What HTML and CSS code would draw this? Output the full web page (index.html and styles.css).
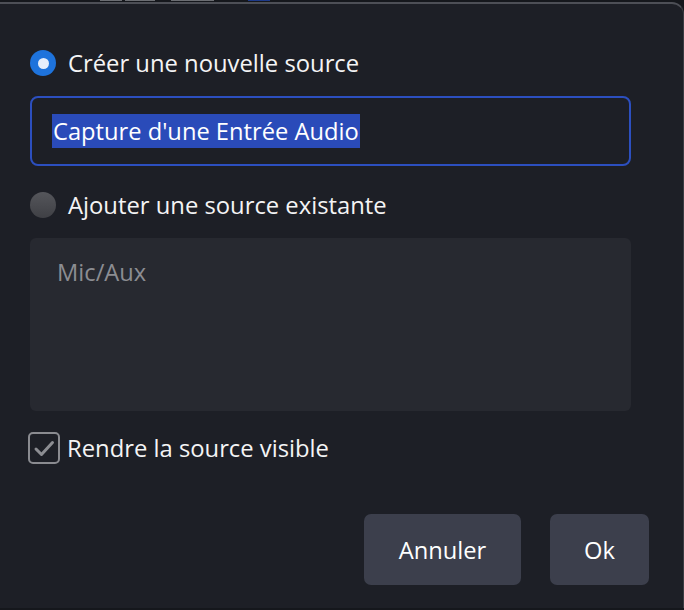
FILE: index.html
```html
<!DOCTYPE html>
<html lang="fr">
<head>
<meta charset="utf-8">
<link rel="stylesheet" href="styles.css">
</head>
<body>
<div class="topstrip">
  <span class="tab t1"></span><span class="tab t2"></span><span class="tab t3"></span><span class="tab t4"></span>
</div>
<div class="dialog">
  <label class="radio-row">
    <span class="radio radio-on"><span class="dot"></span></span>
    <span class="label">Créer une nouvelle source</span>
  </label>
  <div class="input"><span class="sel">Capture d'une Entrée Audio</span></div>
  <label class="radio-row row2">
    <span class="radio radio-off"></span>
    <span class="label">Ajouter une source existante</span>
  </label>
  <div class="list"><div class="item">Mic/Aux</div></div>
  <label class="check-row">
    <span class="check">
      <svg width="27" height="27" viewBox="0 0 27 27"><path d="M5 14 L10.5 19.5 L21.5 7.5" fill="none" stroke="#8c8d92" stroke-width="3" stroke-linecap="round" stroke-linejoin="round"/></svg>
    </span>
    <span class="label">Rendre la source visible</span>
  </label>
  <div class="buttons">
    <button class="btn btn-cancel">Annuler</button>
    <button class="btn btn-ok">Ok</button>
  </div>
</div>
</body>
</html>
```
FILE: styles.css
```css
html, body {
  margin: 0;
  padding: 0;
  background: #15171c;
  width: 684px;
  height: 610px;
  overflow: hidden;
  font-family: "Open Sans", "Noto Sans", sans-serif;
}
.topstrip {
  height: 2px;
  display: flex;
  align-items: stretch;
  background: #15171c;
}
.tab { display: block; height: 1px; }
.t1 { margin-left: 100px; width: 22px; background: #6b6d72; }
.t2 { margin-left: 3px; width: 30px; background: #6b6d72; }
.t3 { margin-left: 16px; width: 43px; background: #6b6d72; }
.t4 { margin-left: 34px; width: 22px; background: #1d3a8a; }
.dialog {
  background: #1d1f26;
  border-top: 2px solid #4d4f56;
  border-right: 1px solid #3a3c42;
  border-top-right-radius: 12px;
  height: 606px;
  box-sizing: border-box;
  padding: 44px 52px 0 30px;
  color: #ffffff;
}
.radio-row {
  display: flex;
  align-items: center;
  height: 30px;
}
.radio {
  width: 26px;
  height: 26px;
  border-radius: 50%;
  box-sizing: border-box;
  display: flex;
  align-items: center;
  justify-content: center;
  flex: none;
}
.radio-on { background: #1e73dc; }
.radio-on .dot { width: 11px; height: 11px; border-radius: 50%; background: #e6eefb; }
.radio-off { background: linear-gradient(#55565b, #3f4045); }
.label {
  margin-left: 12px;
  font-size: 23.8px;
  line-height: 30px;
  color: #f4f4f5;
}
.input {
  margin-top: 18px;
  height: 70px;
  border: 2px solid #2c4fbf;
  border-radius: 8px;
  box-sizing: border-box;
  padding-left: 20px;
  display: flex;
  align-items: center;
}
.sel {
  background: #2a4bb9;
  color: #ffffff;
  font-size: 23.7px;
  line-height: 34px;
  padding: 0 1px 0 1px;
}
.row2 { margin-top: 24px; }
.list {
  margin-top: 18px;
  height: 173px;
  background: #272930;
  border-radius: 6px;
  padding: 17px 27px;
  box-sizing: border-box;
}
.item {
  color: #8c8d92;
  font-size: 23.7px;
  line-height: 34px;
}
.check-row {
  display: flex;
  align-items: center;
  margin-top: 21px;
  margin-left: -2px;
  height: 32px;
}
.check {
  width: 32px;
  height: 32px;
  border: 2px solid #8a8b90;
  border-radius: 5px;
  box-sizing: border-box;
  display: flex;
  align-items: center;
  justify-content: center;
  flex: none;
}
.check-row .label { margin-left: 7px; }
.buttons {
  display: flex;
  justify-content: flex-end;
  gap: 29px;
  margin-top: 50px;
  margin-right: -18px;
}
.btn {
  height: 71px;
  border: none;
  border-radius: 7px;
  background: #3c3f4c;
  color: #ffffff;
  font-family: "Open Sans", "Noto Sans", sans-serif;
  font-size: 23.7px;
  padding: 0;
}
.btn-cancel { width: 157px; }
.btn-ok { width: 99px; }
```
